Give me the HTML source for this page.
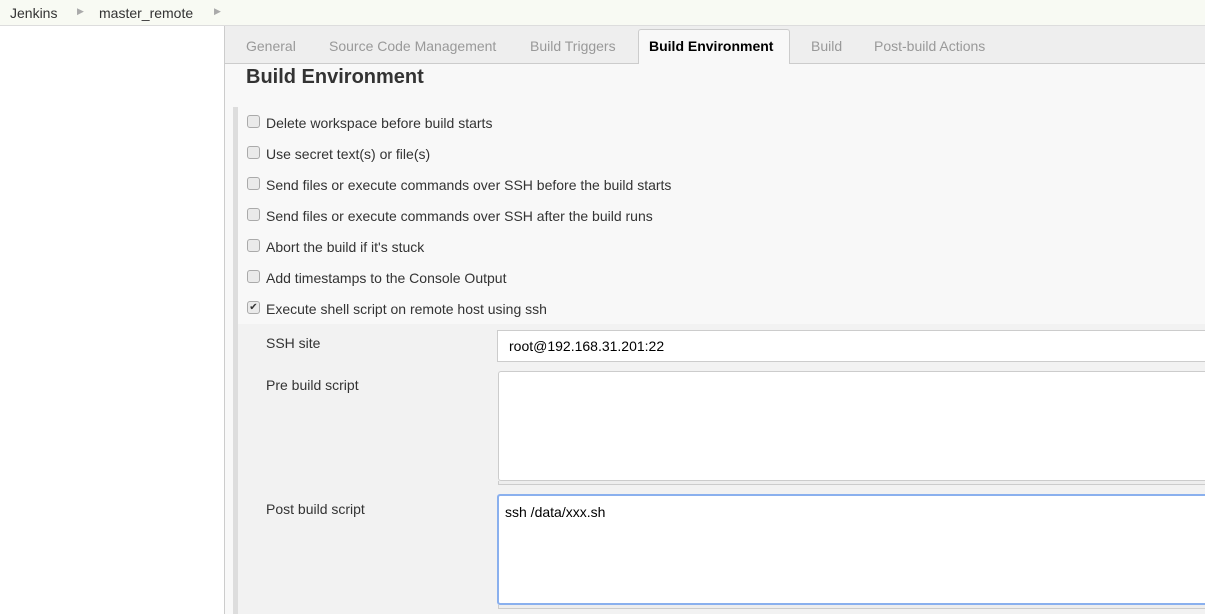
<!DOCTYPE html>
<html><head><style>
body{margin:0;width:1205px;height:614px;overflow:hidden;font-family:"Liberation Sans",Arial,sans-serif;font-size:14px;color:#333;background:#fff;position:relative}
.a{position:absolute}
.bc{left:0;top:0;width:1205px;height:25px;background:#f8faf3;border-bottom:1px solid #ddd}
.tabs{left:225px;top:26px;width:980px;height:37px;background:#eee;border-bottom:1px solid #ccc}
.tab{top:12px;color:#999;font-size:14px}
.main{left:225px;top:64px;width:980px;height:550px;background:#f8f8f8}
.cb{width:11px;height:11px;border:1px solid #aaa;border-radius:3px;background:#eaeaea}
.lbl{font-size:14px;color:#333}
.field{background:#fff;border:1px solid #ccc;border-right:none}
</style></head><body>
<div class="a bc"></div>
<div class="a" style="left:10px;top:5px;color:#333">Jenkins</div>
<div class="a" style="left:77px;top:6px;color:#aaa;font-size:9px">▶</div>
<div class="a" style="left:99px;top:5px;color:#333">master_remote</div>
<div class="a" style="left:214px;top:6px;color:#aaa;font-size:9px">▶</div>
<div class="a" style="left:224px;top:26px;width:1px;height:588px;background:#ccc"></div>
<div class="a tabs"></div>
<div class="a tab" style="left:246px;top:38px">General</div>
<div class="a tab" style="left:329px;top:38px">Source Code Management</div>
<div class="a tab" style="left:530px;top:38px">Build Triggers</div>
<div class="a" style="left:638px;top:29px;width:150px;height:35px;background:#f8f8f8;border:1px solid #ccc;border-bottom:none;border-radius:3px 3px 0 0"></div>
<div class="a" style="left:649px;top:38px;font-weight:bold;color:#000">Build Environment</div>
<div class="a tab" style="left:811px;top:38px">Build</div>
<div class="a tab" style="left:874px;top:38px">Post-build Actions</div>
<div class="a main"></div>
<div class="a" style="left:246px;top:66px;font-size:20px;font-weight:bold;color:#333">Build Environment</div>
<div class="a" style="left:233px;top:107px;width:5px;height:507px;background:#ddd"></div>
<div class="a cb" style="left:247px;top:115px"></div><div class="a lbl" style="left:266px;top:115px">Delete workspace before build starts</div>
<div class="a cb" style="left:247px;top:146px"></div><div class="a lbl" style="left:266px;top:146px">Use secret text(s) or file(s)</div>
<div class="a cb" style="left:247px;top:177px"></div><div class="a lbl" style="left:266px;top:177px">Send files or execute commands over SSH before the build starts</div>
<div class="a cb" style="left:247px;top:208px"></div><div class="a lbl" style="left:266px;top:208px">Send files or execute commands over SSH after the build runs</div>
<div class="a cb" style="left:247px;top:239px"></div><div class="a lbl" style="left:266px;top:239px">Abort the build if it's stuck</div>
<div class="a cb" style="left:247px;top:270px"></div><div class="a lbl" style="left:266px;top:270px">Add timestamps to the Console Output</div>
<div class="a cb" style="left:247px;top:301px;font-size:10px;line-height:11px;text-align:center;color:#333">✔</div><div class="a lbl" style="left:266px;top:301px">Execute shell script on remote host using ssh</div>
<div class="a" style="left:238px;top:324px;width:967px;height:290px;background:#f2f2f2"></div>
<div class="a lbl" style="left:266px;top:335px">SSH site</div>
<div class="a field" style="left:497px;top:330px;width:708px;height:30px"></div>
<div class="a lbl" style="left:509px;top:338px;color:#000">root@192.168.31.201:22</div>
<div class="a lbl" style="left:266px;top:377px">Pre build script</div>
<div class="a field" style="left:498px;top:371px;width:707px;height:108px;border-radius:3px 0 0 3px"></div>
<div class="a" style="left:498px;top:481px;width:707px;height:3px;border:1px solid #ccc;border-top:none;border-right:none;background:#eee"></div>
<div class="a lbl" style="left:266px;top:501px">Post build script</div>
<div class="a" style="left:497px;top:494px;width:707px;height:107px;background:#fff;border:2px solid #8ab0ee;border-right:none;border-radius:3px 0 0 3px"></div>
<div class="a lbl" style="left:505px;top:504px;color:#000">ssh /data/xxx.sh</div>
<div class="a" style="left:498px;top:605px;width:707px;height:3px;border:1px solid #ccc;border-top:none;border-right:none;background:#eee"></div>
</body></html>
